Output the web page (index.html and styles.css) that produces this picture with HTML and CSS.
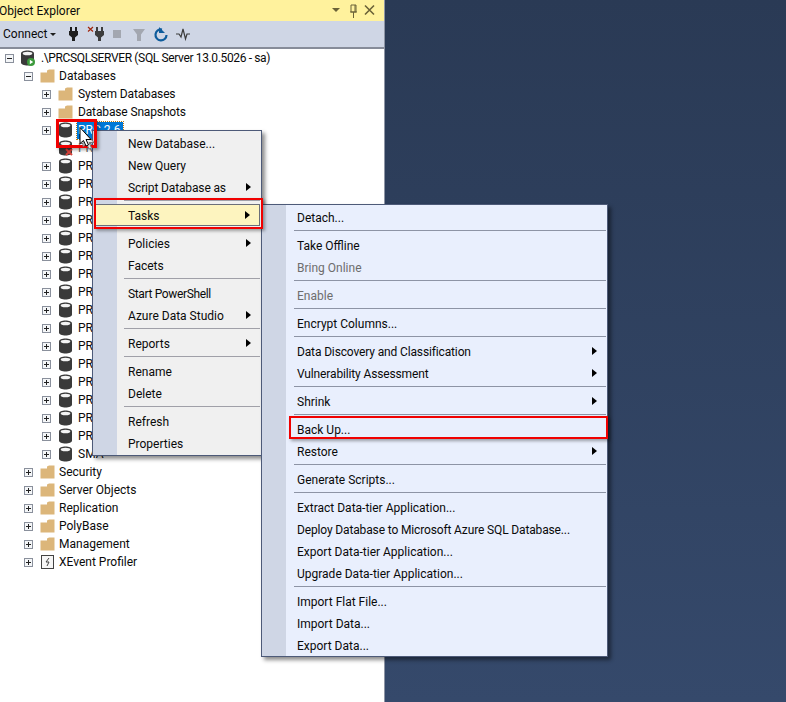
FILE: index.html
```html
<!DOCTYPE html>
<html>
<head>
    <title>Object Explorer</title>
    <link rel="stylesheet" href="styles.css">
</head>
<body>
    <svg class="defs" width="0" height="0">
        <symbol id="db" viewBox="0 0 15 16">
            <path d="M1 3.5C1 1.5 4 .5 7.5 .5S14 1.500 14 3.500V12.500C14 14.500 11 15.500 7.500 15.500S1 14.500 1 12.500Z" fill="#3a3a3a"/>
            <ellipse cx="7.500" cy="3.500" rx="4.800" ry="1.800" fill="#f4f4f4"/>
        </symbol>
        <symbol id="folder" viewBox="0 0 15 14">
            <path d="M.5 3.500H7V1.500L9 .5H14.500V13.500H.5Z" fill="#dcb67a"/>
        </symbol>
    </svg>

    <div class="explorer">
        <div class="title-bar">
            <span class="title">Object Explorer</span>
            <svg class="title-icons" width="48" height="14" viewBox="0 0 48 14">
                <path d="M0 4H8L4 8Z" fill="#6b6238"/>
                <path d="M19 1H24V8H19ZM18 8H25M21.500 8V14M23 1V8" fill="none" stroke="#6b6238"/>
                <path d="M33 1.500L42 10.500M42 1.500L33 10.500" fill="none" stroke="#6b6238" stroke-width="1.600"/>
            </svg>
        </div>
        <div class="toolbar">
            <span class="connect">Connect</span>
            <span class="caret"></span>
            <svg class="tools" width="124" height="18" viewBox="0 0 124 18">
                <!-- connect -->
                <path d="M1 6H10V10L7 12.500V16H4V12.500L1 10Z" fill="#1e1e1e"/>
                <path d="M3 2V6M8 2V6" stroke="#1e1e1e" stroke-width="2"/>
                <!-- disconnect -->
                <path d="M27 6H36V10L33 12.500V16H30V12.500L27 10Z" fill="#3c3c3c"/>
                <path d="M29 2V6M34 2V6" stroke="#3c3c3c" stroke-width="2"/>
                <path d="M20 2L25 6.500M25 2L20 6.500" stroke="#a1260d" stroke-width="1.200"/>
                <!-- stop -->
                <rect x="45" y="5" width="8" height="8" fill="#a3a7b0"/>
                <!-- filter -->
                <path d="M65 4H77L73 9.500V16H69V9.500Z" fill="#a3a7b0"/>
                <!-- refresh -->
                <path d="M94 4.500A5.500 5.500 0 1 0 98.500 10" fill="none" stroke="#0e5c9c" stroke-width="2.200"/>
                <path d="M91 2V8H97Z" fill="#0e5c9c"/>
                <!-- activity -->
                <path d="M108 9H111L113 12L115 4L117.500 14L119 9H122" fill="none" stroke="#3c3c3c" stroke-width="1.200"/>
            </svg>
        </div>
        <div class="tree">
            <div class="row server">
                <span class="exp open"></span>
                <svg class="icon" width="15" height="16" viewBox="0 0 15 16">
                    <use href="#db"/>
                    <circle cx="11" cy="12" r="4" fill="#3c9a3c"/>
                    <path d="M9.800 9.800V14.200L13.200 12Z" fill="#fff"/>
                </svg>
                <span class="label tighter">.\PRCSQLSERVER (SQL Server 13.0.5026 - sa)</span>
            </div>
            <div class="row level1"><span class="exp open"></span><svg class="icon" width="15" height="14"><use href="#folder"/></svg><span class="label">Databases</span></div>
            <div class="row level2"><span class="exp"></span><svg class="icon" width="15" height="14"><use href="#folder"/></svg><span class="label tight">System Databases</span></div>
            <div class="row level2"><span class="exp"></span><svg class="icon" width="15" height="14"><use href="#folder"/></svg><span class="label tight">Database Snapshots</span></div>
            <div class="row level2"><span class="exp"></span><svg class="icon" width="15" height="16"><use href="#db"/></svg><span class="label selected">PRC 2.6</span></div>
            <div class="row level2">
                <span class="exp blank"></span>
                <svg class="icon" width="15" height="16" viewBox="0 0 15 16">
                    <use href="#db"/>
                    <path d="M8 9L14 15M14 9L8 15" stroke="#d9423a" stroke-width="2"/>
                </svg>
                <span class="label muted">PRC</span>
            </div>
            <div class="row level2"><span class="exp"></span><svg class="icon" width="15" height="16"><use href="#db"/></svg><span class="label">PRC</span></div>
            <div class="row level2"><span class="exp"></span><svg class="icon" width="15" height="16"><use href="#db"/></svg><span class="label">PRC</span></div>
            <div class="row level2"><span class="exp"></span><svg class="icon" width="15" height="16"><use href="#db"/></svg><span class="label">PRC</span></div>
            <div class="row level2"><span class="exp"></span><svg class="icon" width="15" height="16"><use href="#db"/></svg><span class="label">PRC</span></div>
            <div class="row level2"><span class="exp"></span><svg class="icon" width="15" height="16"><use href="#db"/></svg><span class="label">PRC</span></div>
            <div class="row level2"><span class="exp"></span><svg class="icon" width="15" height="16"><use href="#db"/></svg><span class="label">PRC</span></div>
            <div class="row level2"><span class="exp"></span><svg class="icon" width="15" height="16"><use href="#db"/></svg><span class="label">PRC</span></div>
            <div class="row level2"><span class="exp"></span><svg class="icon" width="15" height="16"><use href="#db"/></svg><span class="label">PRC</span></div>
            <div class="row level2"><span class="exp"></span><svg class="icon" width="15" height="16"><use href="#db"/></svg><span class="label">PRC</span></div>
            <div class="row level2"><span class="exp"></span><svg class="icon" width="15" height="16"><use href="#db"/></svg><span class="label">PRC</span></div>
            <div class="row level2"><span class="exp"></span><svg class="icon" width="15" height="16"><use href="#db"/></svg><span class="label">PRC</span></div>
            <div class="row level2"><span class="exp"></span><svg class="icon" width="15" height="16"><use href="#db"/></svg><span class="label">PRC</span></div>
            <div class="row level2"><span class="exp"></span><svg class="icon" width="15" height="16"><use href="#db"/></svg><span class="label">PRC</span></div>
            <div class="row level2"><span class="exp"></span><svg class="icon" width="15" height="16"><use href="#db"/></svg><span class="label">PRC</span></div>
            <div class="row level2"><span class="exp"></span><svg class="icon" width="15" height="16"><use href="#db"/></svg><span class="label">PRC</span></div>
            <div class="row level2"><span class="exp"></span><svg class="icon" width="15" height="16"><use href="#db"/></svg><span class="label">PRC</span></div>
            <div class="row level2"><span class="exp"></span><svg class="icon" width="15" height="16"><use href="#db"/></svg><span class="label">SMA</span></div>
            <div class="row level1"><span class="exp"></span><svg class="icon" width="15" height="14"><use href="#folder"/></svg><span class="label">Security</span></div>
            <div class="row level1"><span class="exp"></span><svg class="icon" width="15" height="14"><use href="#folder"/></svg><span class="label">Server Objects</span></div>
            <div class="row level1"><span class="exp"></span><svg class="icon" width="15" height="14"><use href="#folder"/></svg><span class="label">Replication</span></div>
            <div class="row level1"><span class="exp"></span><svg class="icon" width="15" height="14"><use href="#folder"/></svg><span class="label">PolyBase</span></div>
            <div class="row level1"><span class="exp"></span><svg class="icon" width="15" height="14"><use href="#folder"/></svg><span class="label">Management</span></div>
            <div class="row level1">
                <span class="exp"></span>
                <svg class="icon" width="15" height="14" viewBox="0 0 15 14">
                    <rect x="1.500" y=".5" width="12" height="13" fill="#f6f6f6" stroke="#424242"/>
                    <path d="M9 3L6 7H9L7 11" fill="none" stroke="#424242"/>
                </svg>
                <span class="label">XEvent Profiler</span>
            </div>
        </div>
    </div>
    <div class="desktop"></div>

    <!-- 右键菜单 -->
    <div class="menu context-menu">
        <div class="item">New Database...</div>
        <div class="item">New Query</div>
        <div class="item more tight">Script Database as</div>
        <div class="sep"></div>
        <div class="item more active">Tasks</div>
        <div class="sep"></div>
        <div class="item more">Policies</div>
        <div class="item">Facets</div>
        <div class="sep"></div>
        <div class="item tighter">Start PowerShell</div>
        <div class="item more">Azure Data Studio</div>
        <div class="sep"></div>
        <div class="item more">Reports</div>
        <div class="sep"></div>
        <div class="item">Rename</div>
        <div class="item">Delete</div>
        <div class="sep"></div>
        <div class="item">Refresh</div>
        <div class="item">Properties</div>
    </div>

    <!-- Tasks 子菜单 -->
    <div class="menu tasks-menu">
        <div class="item">Detach...</div>
        <div class="sep"></div>
        <div class="item">Take Offline</div>
        <div class="item disabled">Bring Online</div>
        <div class="sep"></div>
        <div class="item disabled">Enable</div>
        <div class="sep"></div>
        <div class="item">Encrypt Columns...</div>
        <div class="sep"></div>
        <div class="item more tight">Data Discovery and Classification</div>
        <div class="item more tight">Vulnerability Assessment</div>
        <div class="sep"></div>
        <div class="item more">Shrink</div>
        <div class="sep"></div>
        <div class="item">Back Up...</div>
        <div class="item more">Restore</div>
        <div class="sep"></div>
        <div class="item">Generate Scripts...</div>
        <div class="sep"></div>
        <div class="item">Extract Data-tier Application...</div>
        <div class="item tight">Deploy Database to Microsoft Azure SQL Database...</div>
        <div class="item">Export Data-tier Application...</div>
        <div class="item">Upgrade Data-tier Application...</div>
        <div class="sep"></div>
        <div class="item">Import Flat File...</div>
        <div class="item">Import Data...</div>
        <div class="item">Export Data...</div>
    </div>

    <!-- 红色标注框 -->
    <div class="mark mark-db"></div>
    <div class="mark mark-tasks"></div>
    <div class="mark mark-backup"></div>

    <svg class="cursor" width="20" height="24" viewBox="0 0 20 24">
        <path d="M4 3.500V19.500L7.500 16.500L10 22L12.500 21L10 15.500H15Z" fill="#e8e8e8" stroke="#777"/>
        <path d="M1 .5V16.500L4.500 13.500L7 19L9.500 18L7 12.500H12Z" fill="#fff" stroke="#000"/>
    </svg>
</body>
</html>
```

FILE: styles.css
```css
html, body {
    margin: 0;
    height: 100%;
}
body {
    display: flex;
    height: 702px;
    overflow: hidden;
    position: relative;
    font-family: Roboto, "Noto Sans", Arial, sans-serif;
    font-size: 12px;
    color: #0a0a0a;
}
.defs {
    position: absolute;
}
.tight {
    letter-spacing: -0.14px;
}
.tighter {
    letter-spacing: -0.36px;
}

.explorer {
    width: 384px;
    display: flex;
    flex-direction: column;
    background: #fff;
    border-right: 1px solid #8e95a5;
}
.title-bar {
    height: 21px;
    background: #fff29d;
    display: flex;
    align-items: center;
    justify-content: space-between;
    font-size: 12px;
}
.title {
    margin-left: -1px;
}
.title-icons {
    margin-right: 4px;
    margin-top: 1px;
}
.toolbar {
    height: 26px;
    background: #cfd6e5;
    display: flex;
    align-items: center;
}
.connect {
    margin-left: 3px;
    width: 44px;
    font-size: 12px;
}
.caret {
    width: 0;
    height: 0;
    margin-left: 3px;
    border: 3px solid transparent;
    border-top: 3px solid #1e1e1e;
    border-bottom: 0;
}
.tools {
    margin-left: 12px;
    overflow: visible;
}

.tree {
    flex: 1;
    border-top: 2px solid #878c99;
    padding-top: 0;
}
.row {
    height: 18px;
    display: flex;
    align-items: center;
    white-space: nowrap;
}
.server .exp {
    margin-left: 5px;
}
.server .icon {
    margin: 0 6px 0 6px;
}
.level1 .exp {
    margin-left: 24px;
}
.level1 .icon {
    margin: 0 4px 0 7px;
}
.level2 .exp {
    margin-left: 42px;
}
.level2 .icon {
    margin: 0 5px 0 7px;
}

/* 展开按钮 */
.exp {
    width: 9px;
    height: 9px;
    box-sizing: border-box;
    flex: none;
    border: 1px solid #8a909c;
    background: #f4f6f8;
    position: relative;
}
.exp::before {
    content: "";
    position: absolute;
    left: 1px;
    top: 3px;
    width: 5px;
    height: 1px;
    background: #222;
}
.exp::after {
    content: "";
    position: absolute;
    left: 3px;
    top: 1px;
    width: 1px;
    height: 5px;
    background: #222;
}
.exp.open::after {
    display: none;
}
.exp.blank {
    visibility: hidden;
}
.icon {
    flex: none;
}
.label {
    line-height: 17px;
    margin-top: 1px;
}
.selected {
    background: #0078d7;
    color: #fff;
    outline: 1px dotted #b9770e;
    padding: 0 3px 0 1px;
    margin-left: -1px;
}
.muted {
    color: #666;
}

.desktop {
    flex: 1;
    background: linear-gradient(#2a3a55, #35496b);
}

/* 菜单 */
.menu {
    position: absolute;
    box-sizing: border-box;
    padding: 1px 0;
    border: 1px solid #4d5a78;
    box-shadow: 3px 3px 4px rgba(0, 0, 0, 0.45);
}
.context-menu {
    left: 92px;
    top: 130px;
    width: 170px;
    height: 326px;
    background: linear-gradient(to right, #cfd6e5 24px, #f0f0f0 24px);
}
.tasks-menu {
    left: 261px;
    top: 204px;
    width: 347px;
    height: 453px;
    padding: 1px 0 0;
    background: linear-gradient(to right, #cfd6e5 24px, #e9effd 24px);
    background-repeat: no-repeat;
}
.item {
    height: 22px;
    display: flex;
    align-items: center;
    justify-content: space-between;
    box-sizing: border-box;
    padding: 1px 10px 0 35px;
}
.more::after {
    content: "";
    margin-top: -1px;
    border-left: 5px solid #000;
    border-top: 4.500px solid transparent;
    border-bottom: 4.500px solid transparent;
}
.active {
    margin: 0 1px;
    padding-left: 33px;
    padding-right: 9px;
    background: #fdf4bf;
    border: 1px solid #6b6f7a;
}
.disabled {
    color: #6d6d6d;
}
.sep {
    height: 1px;
    margin: 2px 1px 3px 31px;
    background: #a0a0a8;
}
.tasks-menu .sep {
    margin-left: 32px;
    background: #8d94a5;
}
.tasks-menu .item {
    padding-left: 35px;
}

.mark {
    position: absolute;
    box-sizing: border-box;
    border: 2px solid #f00000;
    box-shadow: 2px 2px 3px rgba(0, 0, 0, 0.35);
}
.mark-db {
    left: 56px;
    top: 119px;
    width: 41px;
    height: 29px;
    border-width: 3px;
}
.mark-tasks {
    left: 94px;
    top: 198px;
    width: 169px;
    height: 31px;
}
.mark-backup {
    left: 289px;
    top: 416px;
    width: 319px;
    height: 23px;
}
.cursor {
    position: absolute;
    left: 79px;
    top: 127px;
}
```
